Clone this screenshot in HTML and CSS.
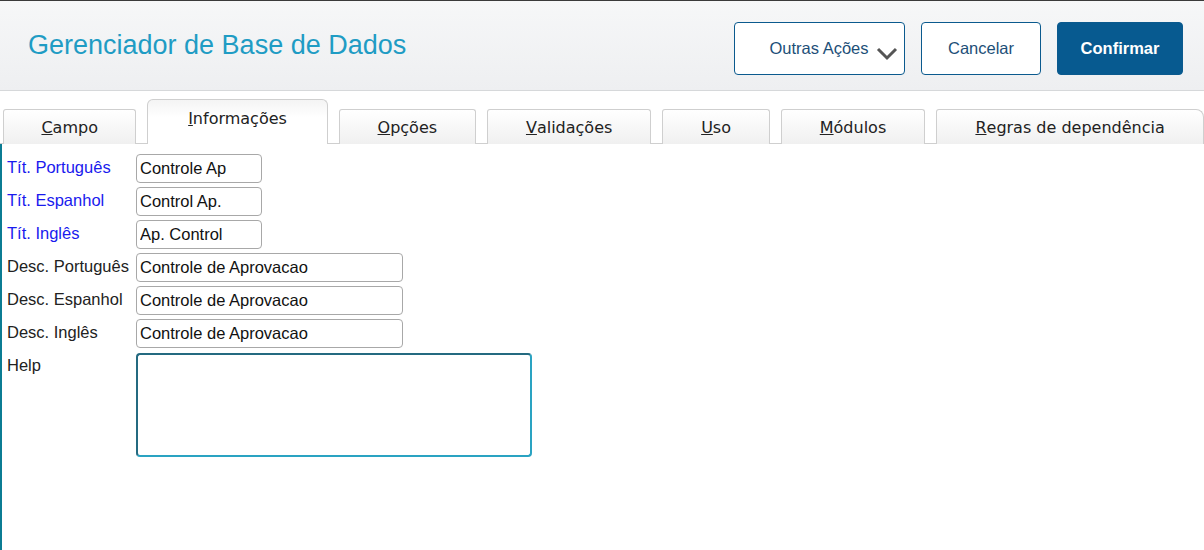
FILE: index.html
```html
<!DOCTYPE html>
<html lang="pt">
  <head>
    <meta charset="UTF-8" />
    <title>Gerenciador de Base de Dados</title>
    <link rel="stylesheet" href="styles.css">
  </head>
  <body>
    <div class="header">
      <h1>Gerenciador de Base de Dados</h1>
      <div class="actions">
        <button class="btn btn-more">Outras Ações
          <svg class="chevron" width="22" height="14" viewBox="0 0 22 14">
            <path d="M2 2 L11 11 L20 2" fill="none" stroke="#555" stroke-width="3" />
          </svg>
        </button>
        <button class="btn btn-cancel">Cancelar</button>
        <button class="btn btn-confirm">Confirmar</button>
      </div>
    </div>

    <div class="tabs">
      <div class="tab tab-campo"><u>C</u>ampo</div>
      <div class="tab tab-info active"><u>I</u>nformações</div>
      <div class="tab tab-opcoes"><u>O</u>pções</div>
      <div class="tab tab-valid"><u>V</u>alidações</div>
      <div class="tab tab-uso"><u>U</u>so</div>
      <div class="tab tab-mod"><u>M</u>ódulos</div>
      <div class="tab tab-regras"><u>R</u>egras de dependência</div>
    </div>

    <div class="content">
      <div class="form">
        <label class="lbl lbl-blue">Tít. Português</label>
        <input class="field short" value="Controle Ap" />

        <label class="lbl lbl-blue">Tít. Espanhol</label>
        <input class="field short" value="Control Ap." />

        <label class="lbl lbl-blue">Tít. Inglês</label>
        <input class="field short" value="Ap. Control" />

        <label class="lbl">Desc. Português</label>
        <input class="field long" value="Controle de Aprovacao" />

        <label class="lbl">Desc. Espanhol</label>
        <input class="field long" value="Controle de Aprovacao" />

        <label class="lbl">Desc. Inglês</label>
        <input class="field long" value="Controle de Aprovacao" />

        <label class="lbl">Help</label>
        <textarea class="help"></textarea>
      </div>
    </div>
  </body>
</html>
```

FILE: styles.css
```css
* {
  margin: 0;
  padding: 0;
  box-sizing: border-box;
}

body {
  font-family: "Liberation Sans", Arial, sans-serif;
  background: white;
  height: 550px;
  overflow: hidden;
  display: flex;
  flex-direction: column;
}

.header {
  border-top: 1px solid #3a3a3a;
  border-bottom: 1px solid #d6d8da;
  height: 91px;
  background: linear-gradient(#f6f7f8, #eeeff1);
  display: flex;
  align-items: center;
  justify-content: space-between;
  padding: 5px 21px 0 28px;
}

h1 {
  font-weight: normal;
  font-size: 27px;
  color: #1f9cc4;
  margin-top: -5px;
}

.actions {
  display: flex;
  gap: 16px;
}

.btn {
  height: 53px;
  border: 1px solid #0b5a8e;
  border-radius: 4px;
  background: white;
  color: #1d4f78;
  font-family: "Liberation Sans", Arial, sans-serif;
  font-size: 16.5px;
  display: flex;
  align-items: center;
  justify-content: center;
}

.btn-more {
  width: 171px;
  padding-left: 28px;
}

.chevron {
  margin-left: 7px;
  margin-top: 12px;
}

.btn-cancel {
  width: 120px;
}

.btn-confirm {
  width: 126px;
  background: #075a90;
  color: white;
  font-weight: bold;
}

.tabs {
  display: flex;
  align-items: flex-end;
  gap: 11px;
  padding: 8px 0 0 3px;
  border-bottom: 1px solid #cfcfcf;
  font-family: "DejaVu Sans", Verdana, sans-serif;
  font-size: 16px;
  color: #222;
}

.tab {
  height: 35px;
  border: 1px solid #cfcfcf;
  border-bottom: none;
  border-radius: 3px 3px 0 0;
  background: linear-gradient(#ffffff, #f0f0f0);
  display: flex;
  justify-content: center;
  padding-top: 8px;
  margin-bottom: -1px;
}

.tab.active {
  height: 45px;
  border-radius: 6px 6px 0 0;
  background: linear-gradient(#f4f4f4, #ffffff 40%);
  padding-top: 9px;
}

.tab-campo { width: 134px; }
.tab-info { width: 181px; }
.tab-opcoes { width: 138px; }
.tab-valid { width: 165px; }
.tab-uso { width: 108px; }
.tab-mod { width: 145px; }
.tab-regras { width: 269px; border-radius: 3px 8px 0 0; }

.content {
  flex: 1;
  border-left: 2px solid #0b7c93;
  padding: 10px 0 0 5px;
}

.form {
  display: grid;
  grid-template-columns: 129px auto;
  row-gap: 4px;
  justify-items: start;
}

.lbl {
  font-size: 16.5px;
  color: #222;
  padding-top: 4px;
}

.lbl-blue {
  color: #1a1aee;
}

.field {
  height: 29px;
  border: 1px solid #a8a8a8;
  border-radius: 4px;
  font-family: "Liberation Sans", Arial, sans-serif;
  font-size: 16.5px;
  color: #111;
  padding-left: 3px;
}

.short {
  width: 126px;
}

.long {
  width: 267px;
}

.help {
  margin-top: 1px;
  width: 396px;
  height: 104px;
  border: 2px solid #2aa3c2;
  border-top-color: #246a80;
  border-left-color: #246a80;
  border-radius: 4px;
  resize: none;
}
```
